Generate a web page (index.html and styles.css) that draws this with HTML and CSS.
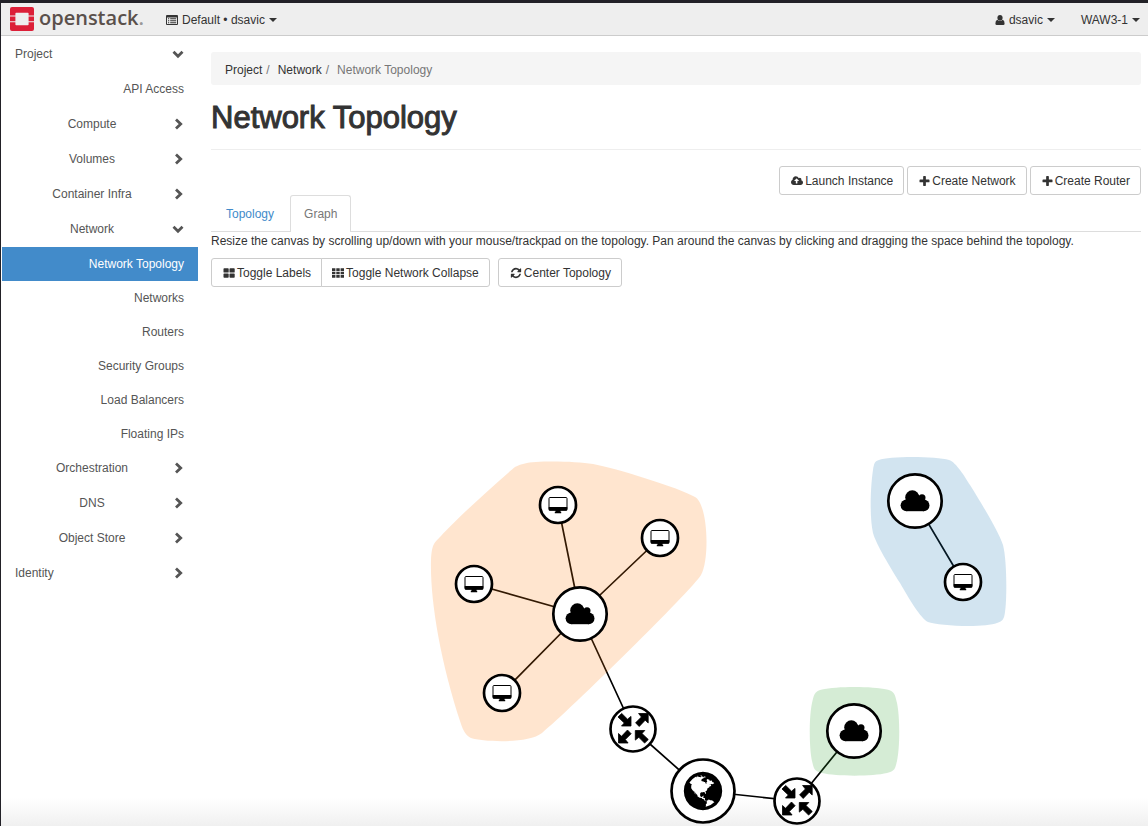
FILE: index.html
```html
<!DOCTYPE html>
<html lang="en">
<head>
<meta charset="utf-8">
<meta name="viewport" content="width=device-width, initial-scale=1">
<title>Network Topology</title>
<link rel="stylesheet" href="styles.css">
</head>
<body>
<svg class="symbols" aria-hidden="true">
  <symbol id="i-right" viewBox="0 0 12 12"><path d="M4 1.500 8.700 6 4 10.500" fill="none" stroke="currentColor" stroke-width="2.800"/></symbol>
  <symbol id="i-down" viewBox="0 0 12 12"><path d="M1.500 3.800 6 8.200 10.500 3.800" fill="none" stroke="currentColor" stroke-width="2.800"/></symbol>
  <symbol id="i-plus" viewBox="120 60 1550 1550"><path d="M1600 736v192q0 40-28 68t-68 28h-416v416q0 40-28 68t-68 28h-192q-40 0-68-28t-28-68v-416h-416q-40 0-68-28t-28-68v-192q0-40 28-68t68-28h416v-416q0-40 28-68t68-28h192q40 0 68 28t28 68v416h416q40 0 68 28t28 68z"/></symbol>
  <path id="arrow" d="M0 0V9.500L-3 6.700-9 13-12.600 9.300-6.800 3.500-9.600 0z" stroke="#000" stroke-width=".8"/>
  <g id="cloud">
    <circle r="26.700" class="ring"/>
    <circle cx="-2.700" cy="-3.600" r="7.100"/><circle cx="7" cy="-3.200" r="3.500"/>
    <circle cx="-8.500" cy="4.300" r="5.900"/><circle cx="8.700" cy="4.400" r="5.800"/>
    <path d="M-8.500-2H9V10.200H-8.500z"/>
  </g>
  <g id="instance">
    <circle r="18" class="ring"/>
    <rect x="-9" y="-7.500" width="18" height="12.500" rx="1" fill="none" stroke="#000"/>
    <path d="M-9.300 2H9.300V4.700Q9.300 5.700 8.300 5.700H-8.300Q-9.300 5.700-9.300 4.700zM-2.500 5.500h5v1.300h.7V8.200h-6.400V6.800h.7z"/>
  </g>
  <g id="router">
    <circle r="22.500" class="ring"/>
    <use href="#arrow" transform="translate(15.200 -15.500)"/>
    <use href="#arrow" transform="translate(-2 -3) rotate(90)"/>
    <use href="#arrow" transform="translate(-14.500 14) rotate(180)"/>
    <use href="#arrow" transform="translate(2.300 1.500) rotate(270)"/>
  </g>
</svg>

<header class="topbar">
  <a class="brand" href="#">
    <svg class="mark" viewBox="0 0 24 24" aria-hidden="true"><path fill="#dc1f38" d="M0 2Q0 0 2 0H22Q24 0 24 2V8.400H18.600V6.600Q18.600 5.800 17.800 5.800H6.200Q5.400 5.800 5.400 6.600V8.400H0zM0 9.400H5.400V14.200H0zM18.600 9.400H24V14.200H18.600zM0 15.200H5.400V17.400Q5.400 18.200 6.200 18.200H17.800Q18.600 18.200 18.600 17.400V15.200H24V22Q24 24 22 24H2Q0 24 0 22z"/></svg>
    <span class="wordmark">openstack<span class="dot">.</span></span>
  </a>
  <button class="menu project-menu" type="button">
    <svg class="icon" viewBox="0 0 12 12" aria-hidden="true"><path fill-rule="evenodd" d="M1 1h10q1 0 1 1v8q0 1-1 1H1q-1 0-1-1V2q0-1 1-1zM1 3.500v6.500h10V3.500zM2 4.300h1.200v1H2zM4.200 4.300h6v1h-6zM2 6.300h1.200v1H2zM4.200 6.300h6v1h-6zM2 8.200h1.200v1H2zM4.200 8.200h6v1h-6z"/></svg>
    <span>Default • dsavic</span><span class="caret"></span>
  </button>
  <button class="menu user-menu" type="button">
    <svg class="icon person" viewBox="0 0 10 12" aria-hidden="true"><ellipse cx="5" cy="3.800" rx="2.600" ry="2.900"/><path d="M2.300 5.800Q5 8.300 7.700 5.800 9.600 6.300 9.600 9.500 9.600 11 8.300 11H1.700Q.4 11 .4 9.500.4 6.300 2.300 5.800z"/></svg>
    <span>dsavic</span><span class="caret"></span>
  </button>
  <button class="menu" type="button"><span>WAW3-1</span><span class="caret"></span></button>
</header>

<div class="layout">
  <nav class="sidebar" aria-label="Main">
    <button class="group top" type="button"><span>Project</span><svg class="chev" aria-hidden="true"><use href="#i-down"/></svg></button>
    <a class="item tall" href="#">API Access</a>
    <button class="group" type="button"><span>Compute</span><svg class="chev" aria-hidden="true"><use href="#i-right"/></svg></button>
    <button class="group" type="button"><span>Volumes</span><svg class="chev" aria-hidden="true"><use href="#i-right"/></svg></button>
    <button class="group" type="button"><span>Container Infra</span><svg class="chev" aria-hidden="true"><use href="#i-right"/></svg></button>
    <button class="group" type="button"><span>Network</span><svg class="chev" aria-hidden="true"><use href="#i-down"/></svg></button>
    <a class="item active" href="#" aria-current="page">Network Topology</a>
    <a class="item" href="#">Networks</a>
    <a class="item" href="#">Routers</a>
    <a class="item" href="#">Security Groups</a>
    <a class="item" href="#">Load Balancers</a>
    <a class="item" href="#">Floating IPs</a>
    <button class="group" type="button"><span>Orchestration</span><svg class="chev" aria-hidden="true"><use href="#i-right"/></svg></button>
    <button class="group" type="button"><span>DNS</span><svg class="chev" aria-hidden="true"><use href="#i-right"/></svg></button>
    <button class="group" type="button"><span>Object Store</span><svg class="chev" aria-hidden="true"><use href="#i-right"/></svg></button>
    <button class="group top" type="button"><span>Identity</span><svg class="chev" aria-hidden="true"><use href="#i-right"/></svg></button>
  </nav>

  <main class="content">
    <ol class="breadcrumb">
      <li><a href="#">Project</a></li>
      <li><a href="#">Network</a></li>
      <li class="current">Network Topology</li>
    </ol>
    <h1 class="title">Network Topology</h1>

    <div class="actions">
      <button class="btn" type="button"><svg class="icon" viewBox="0 0 1920 1792" aria-hidden="true"><path d="M1280 864q0-14-9-23l-352-352q-9-9-23-9t-23 9l-351 351q-10 12-10 24 0 14 9 23t23 9h224v352q0 13 9.500 22.500t22.500 9.500h192q13 0 22.500-9.500t9.500-22.500v-352h224q13 0 22.500-9.500t9.500-22.500zm640 288q0 159-112.500 271.500t-271.500 112.500h-1088q-185 0-316.500-131.500t-131.500-316.500q0-130 70-240t188-165q-2-30-2-43 0-212 150-362t362-150q156 0 285.500 87t188.500 231q71-62 166-62 106 0 181 75t75 181q0 76-41 138 130 31 213.500 135.500t83.500 238.500z"/></svg>Launch Instance</button>
      <button class="btn" type="button"><svg class="icon plus" aria-hidden="true"><use href="#i-plus"/></svg>Create Network</button>
      <button class="btn" type="button"><svg class="icon plus" aria-hidden="true"><use href="#i-plus"/></svg>Create Router</button>
    </div>

    <div class="tabs" role="tablist">
      <a class="tab" role="tab" href="#">Topology</a>
      <a class="tab selected" role="tab" aria-selected="true" href="#">Graph</a>
    </div>
    <p class="hint">Resize the canvas by scrolling up/down with your mouse/trackpad on the topology. Pan around the canvas by clicking and dragging the space behind the topology.</p>

    <div class="toolbar">
      <div class="btn-group">
        <button class="btn" type="button"><svg class="icon" viewBox="0 0 12 12" aria-hidden="true"><rect x="0.500" y="1.200" width="5.200" height="4.400" rx=".7"/><rect x="6.500" y="1.200" width="5.200" height="4.400" rx=".7"/><rect x="0.500" y="6.400" width="5.200" height="4.400" rx=".7"/><rect x="6.500" y="6.400" width="5.200" height="4.400" rx=".7"/></svg>Toggle Labels</button>
        <button class="btn" type="button"><svg class="icon" viewBox="0 0 12 12" aria-hidden="true"><path d="M0 1.300h3.400v2.600H0zM4.300 1.300h3.400v2.600H4.300zM8.600 1.300H12v2.600H8.600zM0 4.700h3.400v2.600H0zM4.300 4.700h3.400v2.600H4.300zM8.600 4.700H12v2.600H8.600zM0 8.100h3.400v2.600H0zM4.300 8.100h3.400v2.600H4.300zM8.600 8.100H12v2.600H8.600z"/></svg>Toggle Network Collapse</button>
      </div>
      <button class="btn" type="button"><svg class="icon" viewBox="0 0 1792 1792" aria-hidden="true"><path d="M1639 1056q0 5-1 7-64 268-268 434.500t-478 166.500q-146 0-282.500-55t-243.500-157l-129 129q-19 19-45 19t-45-19-19-45v-448q0-26 19-45t45-19h448q26 0 45 19t19 45-19 45l-137 137q71 66 161 102t187 36q134 0 250-65t186-179q11-17 53-117 8-23 30-23h192q13 0 22.500 9.500t9.500 22.500zm25-800v448q0 26-19 45t-45 19h-448q-26 0-45-19t-19-45 19-45l138-138q-148-137-349-137-134 0-250 65t-186 179q-11 17-53 117-8 23-30 23h-199q-13 0-22.500-9.500t-9.500-22.500v-7q65-268 270-434.500t480-166.500q146 0 284 55.500t245 156.500l130-129q19-19 45-19t45 19 19 45z"/></svg>Center Topology</button>
    </div>

    <svg class="graph" viewBox="211 287 930 539" role="img" aria-label="Network graph">
      <g class="links">
        <path d="M580 614 558 505M580 614 660 538M580 614 474 584M580 614 502 693M580 614 633 729M633 729 703 791M703 791 797 801M797 801 854 731M915 501 963 582"/>
      </g>
      <path class="hull orange" d="M525 463.500C535 460.500 575 461 593 464 615 468 680 488 695 497 708 504 710 559 701 575 692 590 570 710 542 733 528 744 484 742 471 738 466 736 463 730 461 724 440 660 430 600 431 560 432 544 434 543 441 536 456 519 505 475 515 467Q520 464 525 463.500z"/>
      <path class="hull blue" d="M879 460C888 456 936 456 949 460 956 462 965 477 970 485 980 501 999 532 1003 545 1007 560 1007 600 1005 612 1004 619 1003 621 997 623 985 628 938 626 928 622 921 619 908 597 900 583 890 567 876 544 873 533 869 515 871 482 873 470 874 463 875 461 879 460z"/>
      <path class="hull green" d="M822 689.500C836 686 873 686 887 689.500 895 691.500 895 695 897 703 900 717 900 747 897 761 895 769 895 771 887 773 873 776.500 836 776.500 822 773 814 771 814 769 812 761 809 747 809 717 812 703 814 695 814 691.500 822 689.500z"/>
      <use href="#instance" x="558" y="505"/>
      <use href="#instance" x="660" y="538"/>
      <use href="#instance" x="474" y="584"/>
      <use href="#instance" x="502" y="693"/>
      <use href="#instance" x="963" y="582"/>
      <use href="#cloud" x="580" y="614"/>
      <use href="#cloud" x="915" y="501"/>
      <use href="#cloud" x="854" y="731"/>
      <use href="#router" x="633" y="729"/>
      <use href="#router" x="797" y="801"/>
      <circle class="ring" cx="703" cy="791" r="31.500"/>
      <svg x="680.600" y="768.600" width="44.800" height="44.800" viewBox="0 0 1792 1792"><path d="M896 128q209 0 385.500 103t279.500 279.500 103 385.500-103 385.500-279.500 279.500-385.500 103-385.500-103-279.500-279.500-103-385.500 103-385.500 279.500-279.500 385.500-103zm274 521q-2 1-9.500 9.500t-13.500 9.500q2 0 4.500-5t5-11 3.500-7q6-7 22-15 14-6 52-12 34-8 51 11-2-2 9.500-13t14.500-12q3-2 15-4.500t15-7.500l2-22q-12 1-17.500-7t-6.500-21q0 2-6 8 0-7-4.500-8t-11.500 1-9 1q-10-3-15-7.500t-8-16.500-4-15q-2-5-9.500-11t-9.500-10q-1-2-2.500-5.500t-3-6.500-4-5.500-5.500-2.500-7 5-7.500 10-4.500 5q-3-2-6-1.500t-4.500 1-4.500 3-5 3.500q-3 2-8.500 3t-8.500 2q15-5-1-11-10-4-16-3 9-4 7.500-12t-8.500-14h5q-1-4-8.500-8.500t-17.500-8.500-13-6q-8-5-34-9.500t-33-.5q-5 6-4.500 10.500t4 14 3.500 12.500q1 6-5.500 13t-6.500 12q0 7 14 15.500t10 21.500q-3 8-16 16t-16 12q-5 8-1.500 18.500t10.500 16.500q2 2 1.500 4t-3.500 4.500-5.500 4-6.500 3.500l-3 2q-11 5-20.500-6t-13.500-26q-7-25-16-30-23-8-29 1-5-13-41-26-25-9-58-4 6-1 0-15-7-15-19-12 3-6 4-17.500t1-13.500q3-13 12-23 1-1 7-8.500t9.500-13.500.5-6q35 4 50-11 5-5 11.500-17t10.500-17q9-6 14-5.500t14.500 5.500 14.500 5q14 1 15.500-11t-7.500-20q12 1 3-17-4-7-8-9-12-4-27 5-8 4 2 8-1-1-9.500 10.500t-16.500 17.500-16-5q-1-1-5.500-13.500t-9.500-13.500q-8 0-16 15 3-8-11-15t-24-8q19-12-8-27-7-4-20.500-5t-19.500 4q-5 7-5.500 11.500t5 8 10.500 5.500 11.500 4 8.500 3q14 10 8 14-2 1-8.500 3.500t-11.500 4.500-6 4q-3 4 0 14t-2 14q-5-5-9-17.500t-7-16.500q7 9-25 6l-10-1q-4 0-16 2t-20.500 1-13.500-8q-4-8 0-20 1-4 4-2-4-3-11-9.500t-10-8.500q-46 15-94 41 6 1 12-1 5-2 13-6.500t10-5.500q34-14 42-7l5-5q14 16 20 25-7-4-30-1-20 6-22 12 7 12 5 18-4-3-11.500-10t-14.500-11-15-5q-16 0-22 1-146 80-235 222 7 7 12 8 4 1 5 9t2.500 11 11.500-3q9 8 3 19 1-1 44 27 19 17 21 21 3 11-10 18-1-2-9-9t-9-4q-3 5 .5 18.500t10.500 12.500q-7 0-9.500 16t-2.500 35.500-1 23.500l2 1q-3 12 5.500 34.500t21.500 19.500q-13 3 20 43 6 8 8 9 3 2 12 7.500t15 10 10 10.500q4 5 10 22.500t14 23.500q-2 6 9.500 20t10.500 23q-1 0-2.500 1t-2.500 1q3 7 15.500 14t15.500 13q1 3 2 10t3 11 8 2q2-20-24-62-15-25-17-29-3-5-5.500-15.500t-4.500-14.500q2 0 6 1.500t8.500 3.500 7.500 4 2 3q-3 7 2 17.500t12 18.500 17 19 12 13q6 6 14 19.500t0 13.500q9 0 20 10.500t17 19.500q5 8 8 26t5 24q2 7 8.500 13.500t12.500 9.500l16 8 13 7q5 2 18.500 10.500t21.500 11.500q10 4 16 4t14.500-2.500 13.500-3.500q15-2 29 15t21 21q36 19 55 11-2 1 .5 7.500t8 15.500 9 14.500 5.500 8.500q5 6 18 15t18 15q6-4 7-9-3 8 7 20t18 10q14-3 14-32-31 15-49-18 0-1-2.500-5.500t-4-8.500-2.500-8.500 0-7.500 5-3q9 0 10-3.500t-2-12.500-4-13q-1-8-11-20t-12-15q-5 9-16 8t-16-9q0 1-1.500 5.500t-1.500 6.500q-13 0-15-1 1-3 2.500-17.500t3.500-22.500q1-4 5.500-12t7.500-14.500 4-12.500-4.500-9.500-17.500-2.500q-19 1-26 20-1 3-3 10.500t-5 11.500-9 7q-7 3-24 2t-24-5q-13-8-22.500-29t-9.500-37q0-10 2.500-26.500t3-25-5.500-24.500q3-2 9-9.500t10-10.500q2-1 4.500-1.500t4.500 0 4-1.500 3-6q-1-1-4-3-3-3-4-3 7 3 28.500-1.500t27.500 1.500q15 11 22-2 0-1-2.500-9.500t-.5-13.500q5 27 29 9 3 3 15.500 5t17.500 5q3 2 7 5.500t5.500 4.500 5-.5 8.500-6.500q10 14 12 24 11 40 19 44 7 3 11 2t4.500-9.500 0-14-1.500-12.500l-1-8v-18l-1-8q-15-3-18.500-12t1.500-18.500 15-18.500q1-1 8-3.500t15.500-6.500 12.500-8q21-19 15-35 7 0 11-9-1 0-5-3t-7.500-5-4.500-2q9-5 2-16 5-3 7.500-11t7.500-10q9 12 21 2 8-8 1-16 5-7 20.500-10.500t18.500-9.500q7 2 8-2t1-12 3-12q4-5 15-9t13-5l17-11q3-4 0-4 18 2 31-11 10-11-6-20 3-6-3-9.500t-15-5.500q3-1 11.500-.5t10.500-1.500q15-10-7-16-17-5-43 12zm-163 877q206-36 351-189-3-3-12.500-4.500t-12.500-3.500q-18-7-24-8 1-7-2.500-13t-8-9-12.500-8-11-7q-2-2-7-6t-7-5.500-7.500-4.500-8.500-2-10 1l-3 1q-3 1-5.500 2.500t-5.500 3-4 3 0 2.500q-21-17-36-22-5-1-11-5.500t-10.500-7-10-1.500-11.500 7q-5 5-6 15t-2 13q-7-5 0-17.500t2-18.500q-3-6-10.500-4.500t-12 4.500-11.500 8.500-9 6.500-8.500 5.500-8.500 7.500q-3 4-6 12t-5 11q-2-4-11.500-6.500t-9.500-5.500q2 10 4 35t5 38q7 31-12 48-27 25-29 40-4 22 12 26 0 7-8 20.500t-7 21.500q0 6 2 16z"/></svg>
    </svg>
  </main>
</div>
</body>
</html>
```
FILE: styles.css
```css
* { box-sizing: border-box; }

html { background: #fff; }

body {
  margin: 0;
  min-height: 100vh;
  display: flex;
  flex-direction: column;
  border-left: 1px solid #222127;
  background: linear-gradient(to top, #f0f0f0, #fff 28px);
  color: #333;
  font: 12px/18px "Liberation Sans", Arial, sans-serif;
}

a { color: inherit; text-decoration: none; }

button {
  font: inherit;
  color: inherit;
  background: none;
  border: 0;
  padding: 0;
  cursor: pointer;
}

.symbols { position: absolute; width: 0; height: 0; }

.icon { width: 12px; height: 12px; flex: none; fill: currentColor; }

/* Top bar */
.topbar {
  display: flex;
  align-items: center;
  height: 36px;
  padding: 0 8px 0 9px;
  background: #eee;
  border-top: 3px solid #222127;
  border-bottom: 1px solid #ccc;
}

.brand { display: flex; align-items: center; gap: 5px; }
.mark { width: 24px; height: 24px; }
.wordmark {
  font: 600 20px/28px "Open Sans", "Noto Sans", sans-serif;
  color: #5a504b;
  padding-bottom: 3px;
}
.dot { color: #999; }

.menu { display: flex; align-items: center; gap: 4px; padding-top: 2px; }
.project-menu { margin-left: 22px; }
.user-menu { margin-left: auto; margin-right: 26px; }
.person { width: 10px; }

.caret {
  border: 4px solid transparent;
  border-top-color: currentColor;
  border-bottom: 0;
}

/* Page columns */
.layout { display: flex; flex: 1; }

.sidebar {
  flex: none;
  width: 197px;
  padding: 1px 0 0 1px;
  display: flex;
  flex-direction: column;
  color: #555;
}

.group, .item {
  display: flex;
  align-items: center;
  padding: 0 14px 0 13px;
}
.group, .item.tall { height: 35px; padding-bottom: 2px; }
.group span { flex: 1; }
.group.top span { text-align: left; }
.chev { width: 12px; height: 12px; margin-left: 3px; }
.item { height: 34px; justify-content: flex-end; }
.item.active { background: #428bca; color: #fff; }

.content {
  flex: 1;
  min-width: 0;
  padding: 16px 7px 0 13px;
}

.breadcrumb {
  display: flex;
  margin: 0;
  padding: 9px 14px 6px;
  list-style: none;
  background: #f5f5f5;
  border-radius: 3px;
}
.breadcrumb li + li::before { content: "/"; color: #777; padding: 0 8px 0 4px; }
.breadcrumb .current { color: #777; }

.title {
  margin: 16px 0;
  padding-bottom: 15px;
  border-bottom: 1px solid #eee;
  font-size: 31px;
  line-height: 33px;
  font-weight: 400;
  -webkit-text-stroke: 1px #333;
}

.actions { display: flex; justify-content: flex-end; gap: 3px; }

.btn {
  display: flex;
  align-items: center;
  gap: 2px;
  height: 29px;
  padding: 0 10px 0 11px;
  background: #fff;
  border: 1px solid #ccc;
  border-radius: 3px;
}
.plus { width: 11px; }

.tabs { display: flex; border-bottom: 1px solid #ddd; }
.tab {
  padding: 9px 14px 8px;
  margin-right: 1px;
  border: 1px solid transparent;
  border-bottom: 0;
  color: #428bca;
}
.tab.selected {
  padding: 9px 13px 8px;
  margin-bottom: -1px;
  background: #fff;
  border-color: #ddd;
  border-radius: 3px 3px 0 0;
  color: #777;
}

.hint { margin: 0 0 8px; }

.toolbar { display: flex; gap: 8px; }
.btn-group { display: flex; }
.btn-group .btn:first-child { border-radius: 3px 0 0 3px; }
.btn-group .btn + .btn { margin-left: -1px; padding-left: 10px; border-radius: 0 3px 3px 0; }

/* Topology graph */
.graph { display: block; width: 100%; }
.links { fill: none; stroke: #000; stroke-width: 1.7; }
.hull { fill-opacity: 0.2; }
.orange { fill: #ff7f0e; }
.blue { fill: #1f77b4; }
.green { fill: #2ca02c; }
.ring { fill: #fff; stroke: #000; stroke-width: 2.7; }
```
